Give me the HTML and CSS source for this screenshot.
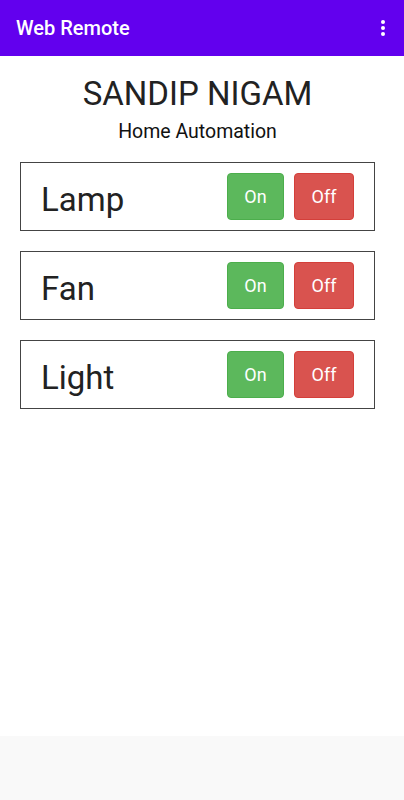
FILE: index.html
```html
<!DOCTYPE html>
<html lang="en">
<head>
	<meta charset="UTF-8">
	<title>Web Remote</title>
	<link rel="stylesheet" href="styles.css">
</head>
<body>
	<div id="app">
		<div class="appbar">
			<span class="appbar-title">Web Remote</span>
			<span class="menu-dots"><i></i><i></i><i></i></span>
		</div>
		<div class="content">
			<h1 class="name">SANDIP NIGAM</h1>
			<p class="subtitle">Home Automation</p>
			<div class="device">
				<span class="device-name">Lamp</span>
				<div class="btns">
					<button class="btn btn-on">On</button>
					<button class="btn btn-off">Off</button>
				</div>
			</div>
			<div class="device">
				<span class="device-name">Fan</span>
				<div class="btns">
					<button class="btn btn-on">On</button>
					<button class="btn btn-off">Off</button>
				</div>
			</div>
			<div class="device">
				<span class="device-name">Light</span>
				<div class="btns">
					<button class="btn btn-on">On</button>
					<button class="btn btn-off">Off</button>
				</div>
			</div>
		</div>
		<div class="navbar"></div>
	</div>
</body>
</html>
```

FILE: styles.css
```css
* {
	box-sizing: border-box;
}
body {
	margin: 0;
	font-family: Roboto, "Liberation Sans", sans-serif;
	background-color: #fff;
}
#app {
	display: flex;
	flex-direction: column;
	height: 800px;
}
.appbar {
	display: flex;
	align-items: center;
	justify-content: space-between;
	height: 56px;
	padding: 0 16px;
	background-color: #6200ee;
	color: #fff;
}
.appbar-title {
	font-size: 20px;
	font-weight: 500;
}
.menu-dots {
	display: flex;
	flex-direction: column;
	gap: 2px;
	margin-right: 3px;
}
.menu-dots i {
	width: 4px;
	height: 4px;
	border-radius: 50%;
	background-color: #fff;
}
.content {
	flex: 1;
	padding: 18px 29px 0 20px;
}
.name {
	margin: 0;
	font-size: 33px;
	font-weight: 400;
	line-height: 40px;
	text-align: center;
	color: #222;
}
.subtitle {
	margin: 6px 0 18px;
	font-size: 19.5px;
	line-height: 24px;
	text-align: center;
	color: #111;
}
.device {
	display: flex;
	align-items: center;
	justify-content: space-between;
	height: 69px;
	margin-bottom: 20px;
	padding: 0 20px;
	border: 1px solid #444;
}
.device-name {
	margin-top: 5px;
	font-size: 33px;
	color: #222;
}
.btns {
	display: flex;
	gap: 10px;
}
.btn {
	height: 47px;
	padding: 0;
	border: 1px solid transparent;
	border-radius: 4px;
	font-family: inherit;
	font-size: 18px;
	color: #fff;
}
.btn-on {
	width: 57px;
	background-color: #5cb85c;
	border-color: #4cae4c;
}
.btn-off {
	width: 60px;
	background-color: #d9534f;
	border-color: #d43f3a;
}
.navbar {
	height: 64px;
	background-color: #f9f9f9;
}
```
